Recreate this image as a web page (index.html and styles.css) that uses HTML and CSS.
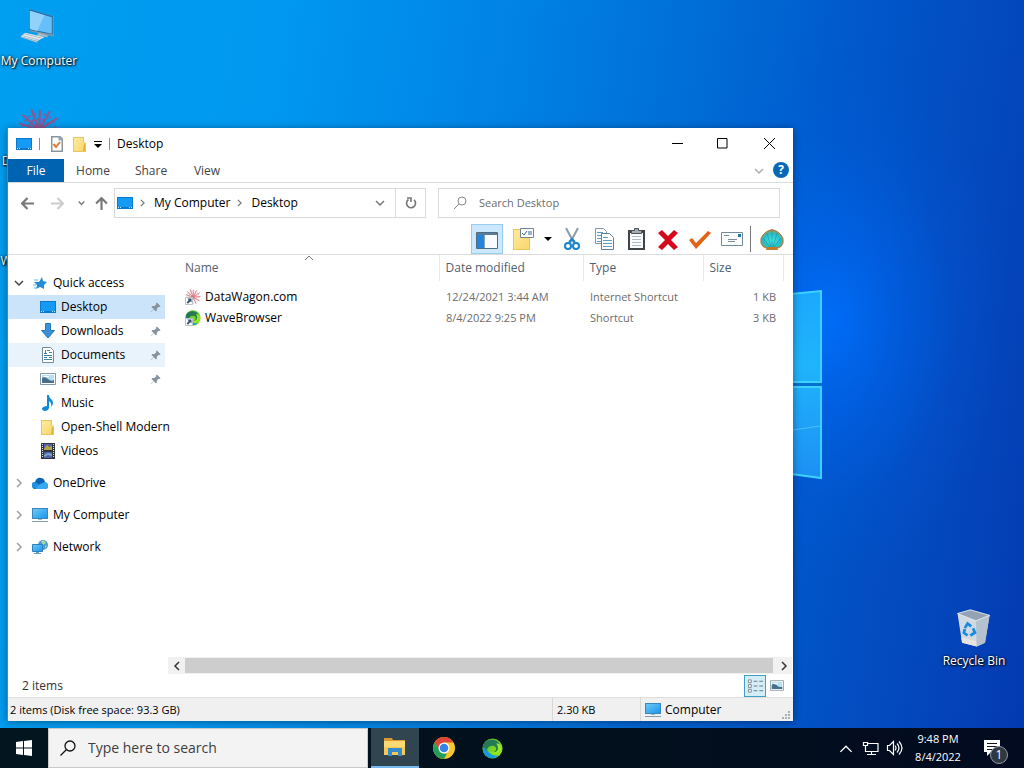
FILE: index.html
```html
<!DOCTYPE html>
<html lang="en">
<head>
<meta charset="utf-8">
<title>Desktop</title>
<link rel="stylesheet" href="styles.css">
</head>
<body>
<svg class="defs" aria-hidden="true">
  <defs>
    <linearGradient id="gBlue" x1="0" y1="0" x2="1" y2="1"><stop offset="0" stop-color="#6cc8fa"/><stop offset="1" stop-color="#1c96ea"/></linearGradient>
    <linearGradient id="gFolder" x1="0" y1="0" x2="1" y2="1"><stop offset="0" stop-color="#ffeaa0"/><stop offset="1" stop-color="#f8d669"/></linearGradient>
    <linearGradient id="gWave" x1="0" y1="0" x2="1" y2="1"><stop offset="0" stop-color="#48b838"/><stop offset="1" stop-color="#a0ee10"/></linearGradient>
    <linearGradient id="gPane" x1="0" y1="0" x2="0" y2="1"><stop offset="0" stop-color="#1ca8fc"/><stop offset=".4" stop-color="#20b4fc"/><stop offset="1" stop-color="#1c90f4"/></linearGradient>
    <radialGradient id="gShell" cx=".5" cy=".6" r=".6"><stop offset="0" stop-color="#46e6ea"/><stop offset=".65" stop-color="#28bcc4"/><stop offset="1" stop-color="#c98c36"/></radialGradient>
    <symbol id="desk" viewBox="0 0 16 12"><path fill="#0b78cc" d="M0 0h16v12H0z"/><path fill="#159af5" d="M1 1h14v9H1z"/><path fill="#b9e4ff" d="M1 10h1v1H1zm2 0h1v1H3zm9 0h1v1h-1zm2 0h1v1h-1z"/></symbol>
    <symbol id="folder" viewBox="0 0 14 16"><path fill="#e9c65b" d="M0 1h11v5l2 1v9H0z"/><path fill="url(#gFolder)" d="M1 2h9v4.500l2 1V15H1z"/><path fill="#dfb33d" d="M11 8h1v7h-2z"/></symbol>
    <symbol id="monitor" viewBox="0 0 16 16"><path fill="#3b86ba" d="M0 1h16v11H0z"/><path fill="url(#gBlue)" d="M1 2h14v9H1z"/><path fill="#9fb8c8" d="M6 12h4v1H6z"/><path fill="#849dad" d="M0 14h16v1H0z"/></symbol>
    <symbol id="picture" viewBox="0 0 16 12"><path fill="#fff" stroke="#8798a4" d="M.5.5h15v11H.5z"/><path fill="#b8def2" d="M2 2h12v8H2z"/><path fill="#466f89" d="M2 5q3-2 6 1t6 1v3H2z"/><path fill="#fff" d="M4 3h5v1H4z"/></symbol>
    <symbol id="pin" viewBox="0 0 12 12"><path fill="#85919c" d="m7.500.5 4 4-1 .9-1-.3-2.200 2.200.2 2-1 1-2.300-2.400L.9 11.300l-.3-.3L4 7.700 1.600 5.400l1-1 2 .2L6.900 2.400 6.600 1.400z"/></symbol>
    <symbol id="right" viewBox="0 0 8 10"><path fill="none" stroke="currentColor" stroke-width="1.500" d="m2 1 4 4-4 4"/></symbol>
    <symbol id="down" viewBox="0 0 10 8"><path fill="none" stroke="currentColor" stroke-width="1.500" d="m1 2 4 4 4-4"/></symbol>
    <symbol id="burst" viewBox="0 0 40 40"><g fill="none" stroke="currentColor" stroke-width="2"><path d="M20 20 2 14m18 6L5 6m15 14L13 1m7 19 1-18m-1 18L30 3M20 20 37 9M20 20l19-1M20 20l17 10M20 20l8 17M20 20l-4 18M20 20 6 33m14-13L1 24"/><circle cx="20" cy="20" r="5"/><circle cx="20" cy="20" r="10" stroke-dasharray="3 2"/><circle cx="20" cy="20" r="15" stroke-dasharray="2 3"/></g></symbol>
    <symbol id="wave" viewBox="0 0 22 22"><circle cx="11" cy="11" r="10.500" fill="url(#gWave)"/><path fill="#1599df" d="M1 10C5 8 5 16 12 18q3 1 6 0C12 24 0 21 1 10z"/><path fill="#257a55" d="M1 10C1 0 17-1 19 8q-1-2-4-2c5 3 2 10-3 8 4 0 4-6-1-6-5 0-6 4-6 6Q3 9 1 10z"/><path fill="#9be725" d="M15 6c5-1 6 5 4 8s-8 4-11 1c8 2 11-4 7-9z"/></symbol>
    <symbol id="shortcut" viewBox="0 0 8 8"><path fill="#fff" stroke="#b8c4cc" d="M.5.500h7v7h-7z"/><path fill="#31506d" d="M2.500 1.500h4v4L5.200 4.300 3 6.800 1.700 5.600l2-2.700z"/></symbol>
  </defs>
</svg>

<main class="desktop">
  <svg class="logo" viewBox="0 0 32 192" aria-hidden="true">
    <path fill="url(#gPane)" stroke="#3cd2ff" stroke-width="2" d="M-2 5 28 2v91H-2zM-2 98h30v91L-2 185z"/>
    <path fill="none" stroke="#50bcff" d="m0 141 27-4"/><path fill="#0870d2" d="M0 94h29v3H0z"/>
  </svg>
  <div class="shortcuts">
    <a class="desk-icon" href="#"><svg viewBox="0 0 48 48"><path fill="#8797a2" d="m13 1 27 8v22l-27-6z"/><path fill="#1c6fac" d="m13 1 26 8v20L13 24z"/><path fill="#66bff6" d="m14 3 24 7v18L14 23z"/><path fill="#91d2fa" d="m14 3 16 5-8 17-8-2z"/><path fill="#a9b8c0" d="m24 27 10 3-1 2-12-2z"/><path fill="#e3e9ec" d="M9 27l21 5-8 4-18-5z"/><path fill="#aebdc5" d="m4 31 18 5v2L4 32z"/><path stroke="#adbac2" d="m8 28 19 5M6 30l18 5"/></svg><span>My Computer</span></a>
    <a class="desk-icon" href="#"><svg class="red"><use href="#burst"/></svg><span>DataWagon…</span></a>
    <a class="desk-icon" href="#"><svg><use href="#wave"/></svg><span>WaveBrowser</span></a>
  </div>
  <a class="desk-icon recycle" href="#"><svg viewBox="0 0 48 48"><path fill="#d2d9e0" d="m6 6 35 2-5 30-9 4-16-4z"/><path fill="#b5c1ce" d="m26 14 15-6-5 30-9 4z"/><path fill="#93a2b5" stroke="#e3eaf0" d="m6 6 14-4 21 6-15 6z"/><path fill="#e9e4df" d="m10 32 16 4 1 6-16-4z"/><g fill="none" stroke="#168bdf" stroke-width="3"><path d="m14 22 3-5 4 3M23 22l2 5-5 3M17 30l-4-3 1-4"/></g></svg><span>Recycle Bin</span></a>

  <section class="window">
    <header class="titlebar">
      <svg class="i-desk"><use href="#desk"/></svg><i class="bar"></i>
      <button class="plain" aria-label="Properties"><svg class="i-page" viewBox="0 0 12 16"><path fill="#fff" stroke="#8a969e" d="M.5.500h8l3 3v12H.500z"/><path fill="none" stroke="#9aa5ad" d="M8.500.500v3h3"/><path fill="none" stroke="#e07830" stroke-width="2" d="m2.500 8 2.500 3 4-5"/></svg></button>
      <button class="plain" aria-label="New folder"><svg class="i-folder"><use href="#folder"/></svg></button>
      <button class="plain" aria-label="Customize toolbar"><svg class="i-custom" viewBox="0 0 8 8"><path d="M0 1h8v1H0zM0 4h8L4 8z"/></svg></button>
      <i class="bar"></i><h1>Desktop</h1>
      <div class="controls">
        <button aria-label="Minimize"><svg viewBox="0 0 11 11"><path d="M0 5.500h11"/></svg></button>
        <button aria-label="Maximize"><svg viewBox="0 0 11 11"><path d="M.5.500h9.500v9.500H.500z"/></svg></button>
        <button aria-label="Close"><svg viewBox="0 0 11 11"><path d="m0 0 11 11M11 0 0 11"/></svg></button>
      </div>
    </header>
    <nav class="ribbon">
      <button class="file">File</button><button>Home</button><button>Share</button><button>View</button>
      <button class="expand" aria-label="Expand ribbon"><svg class="i-down"><use href="#down"/></svg></button>
      <button class="help" aria-label="Help">?</button>
    </nav>
    <div class="address-row">
      <button class="plain back" aria-label="Back"><svg viewBox="0 0 12 12"><path d="M12 6H1m5-5L1 6l5 5"/></svg></button>
      <button class="plain forward" aria-label="Forward"><svg viewBox="0 0 12 12"><path d="M0 6h11M6 1l5 5-5 5"/></svg></button>
      <button class="plain recent" aria-label="Recent locations"><svg viewBox="0 0 10 8"><path d="m1 2 4 4 4-4"/></svg></button>
      <button class="plain up" aria-label="Up"><svg viewBox="0 0 12 12"><path d="M6 12V1M1 6l5-5 5 5"/></svg></button>
      <div class="address">
        <svg class="i-desk"><use href="#desk"/></svg><svg class="i-right"><use href="#right"/></svg>
        <a href="#">My Computer</a><svg class="i-right"><use href="#right"/></svg><a href="#">Desktop</a>
        <button class="drop" aria-label="Previous locations"><svg class="i-down"><use href="#down"/></svg></button>
        <button class="refresh" aria-label="Refresh"><svg viewBox="0 0 12 12"><path fill="none" stroke="#777" stroke-width="1.600" d="M3.500 2.500A4.500 4.500 0 1 0 9 2.800M2 1h4v4"/></svg></button>
      </div>
      <label class="search"><svg viewBox="0 0 14 14"><circle cx="9" cy="5" r="4"/><path d="m6 8-5 5"/></svg><input type="text" placeholder="Search Desktop" aria-label="Search Desktop"></label>
    </div>
    <div class="toolbar">
      <button class="tool on" aria-label="Navigation pane"><svg viewBox="0 0 24 24"><path fill="#f8fcff" stroke="#506c82" d="M1.500 5.500h21v16h-21z"/><path fill="#5c7d95" d="M2 6h20v2H2z"/><path fill="#2385dc" d="M2 8h7v13H2z"/><path fill="#88a5ba" d="M9 8h1v13H9z"/></svg></button>
      <button class="tool" aria-label="Folder options"><svg viewBox="0 0 24 24"><path fill="#e8c45a" d="M1 2h14v7h3v14H1z"/><path fill="url(#gFolder)" d="M2 3h12v7h3v12H2z"/><path fill="#fff" stroke="#718594" d="M8.500 1.500h13v9h-13z"/><path fill="none" stroke="#326a9a" d="m10 6 2 2 3-4m1 1h4m-4 2h4"/></svg></button>
      <button class="arrow" aria-label="More options"><svg viewBox="0 0 8 4"><path d="M0 0h8L4 4z"/></svg></button>
      <button class="tool" aria-label="Cut"><svg viewBox="0 0 24 24"><path fill="none" stroke="#8c9ba7" stroke-width="2" d="m6 1 8 15M18 1l-8 15"/><path fill="none" stroke="#1685cb" stroke-width="2" d="m9 15 3-3 3 3"/><circle cx="8" cy="19" r="3" fill="none" stroke="#1685cb" stroke-width="2"/><circle cx="16" cy="19" r="3" fill="none" stroke="#1685cb" stroke-width="2"/></svg></button>
      <button class="tool" aria-label="Copy"><svg viewBox="0 0 24 24"><path fill="#fff" stroke="#8799a6" d="M3.500 1.500h8l3 3v12h-11z"/><path fill="#fff" stroke="#5c8099" d="M9.500 6.500h8l4 4v12h-12z"/><path stroke="#609dc5" d="M5 5.500h6m-6 3h4m-4 3h4m-4 3h4m2-4h5m-5 3h9m-9 3h9m-9 3h9"/></svg></button>
      <button class="tool" aria-label="Paste"><svg viewBox="0 0 24 24"><path fill="#3e4448" d="M4 3h17v20H4z"/><path fill="#f9fbfc" d="M6 6h13v15H6z"/><path fill="#a4adb3" stroke="#4d555a" d="M7.500 3.500h3v-2h4v2h3v3h-10z"/><path stroke="#b2bbc1" d="M8 9.500h9m-9 3h9m-9 3h9m-9 3h9"/></svg></button>
      <button class="tool" aria-label="Delete"><svg viewBox="0 0 24 24"><path fill="#d4091c" d="m2 6 4-3 6 6 6-6 4 3-7 7 7 7-4 3-6-6-6 6-4-3 7-7z"/></svg></button>
      <button class="tool" aria-label="Apply"><svg viewBox="0 0 24 24"><path fill="#e46216" d="m1 13 3-2 4 5L20 4l3 2L8 22z"/></svg></button>
      <button class="tool" aria-label="Mail"><svg viewBox="0 0 24 24"><path fill="#fafcfd" stroke="#718997" d="M1.500 5.500h21v13h-21z"/><path fill="#2475aa" d="M18 7h3v3h-3z"/><path stroke="#7e8b93" d="M4 8.500h5m-1 4h9m-9 2h7"/></svg></button>
      <i class="divider"></i>
      <button class="tool" aria-label="Open-Shell settings"><svg viewBox="0 0 24 24"><path fill="url(#gShell)" stroke="#b0783c" d="M6 21q-4-1-5-5-1-5 2-8 2-3 5-4 4-3 8 0 3 1 5 4 3 3 2 8-1 4-5 5z"/><path fill="none" stroke="#178e9d" stroke-width=".6" d="M10 20 3 11m8 9L7 6m5 14V4m1 16 4-14m-3 14 7-9"/><path fill="#c57b28" d="M7 20h10l1 3H6z"/></svg></button>
    </div>
    <div class="body">
      <aside class="tree">
        <ul>
          <li><a class="root" href="#"><svg class="chev i-down"><use href="#down"/></svg><svg class="ico" viewBox="0 0 16 16"><path fill="#238ddb" d="m10 2 1 4 4 1-3 3v4l-4-2-4 2 1-4-3-3h5z"/><path stroke="#65b9ef" d="M2 5h4M1 10h3M2 13h2"/></svg>Quick access</a></li>
          <li><a class="item selected" href="#"><svg class="ico"><use href="#desk"/></svg><span>Desktop</span><svg class="pin"><use href="#pin"/></svg></a></li>
          <li><a class="item" href="#"><svg class="ico" viewBox="0 0 16 16"><path fill="#3b91da" stroke="#2878b9" d="M5.500.500h5v7h4L8 15 1.500 7.500h4z"/></svg><span>Downloads</span><svg class="pin"><use href="#pin"/></svg></a></li>
          <li><a class="item hover" href="#"><svg class="ico" viewBox="0 0 16 16"><path fill="#fff" stroke="#748a96" d="M2.500.500h8l3 3v12h-11z"/><path fill="none" stroke="#3f83a2" d="M7 3.500h3M4 6.500h3m2-1h3m-8 3h8m-8 2h3m2 0h3m-8 2h8M5.500 3v4"/></svg><span>Documents</span><svg class="pin"><use href="#pin"/></svg></a></li>
          <li><a class="item" href="#"><svg class="ico"><use href="#picture"/></svg><span>Pictures</span><svg class="pin"><use href="#pin"/></svg></a></li>
          <li><a class="item" href="#"><svg class="ico" viewBox="0 0 16 16"><path fill="#118bd7" d="M7 0h2c0 4 4 4 4 8q0 2-2 4c1-4-1-5-2-6v7q-1 3-4 3-3-.500-3-2.500Q3 11 7 11z"/></svg><span>Music</span></a></li>
          <li><a class="item" href="#"><svg class="ico"><use href="#folder"/></svg><span>Open-Shell Modern</span></a></li>
          <li><a class="item" href="#"><svg class="ico" viewBox="0 0 16 16"><path fill="#30353a" d="M1 0h14v16H1z"/><path fill="#5263a8" d="M4 1h8v6H4zm0 8h8v6H4z"/><path fill="#b2a548" d="m4 6 3-4 2 2 3-1v4H4z"/><path fill="#84a5c7" d="m4 12 4-2 4 1v2l-4-1-4 2z"/><path stroke="#e5e8ea" stroke-dasharray="1 1" d="M2.500 1v14m11-14v14"/></svg><span>Videos</span></a></li>
          <li class="group"><a class="root" href="#"><svg class="chev i-right"><use href="#right"/></svg><svg class="ico" viewBox="0 0 16 16"><path fill="#0964b5" d="M0 10q0-3 3-3 2-5 6-4 3 0 4 4 3 1 3 4 0 3-3 3H3q-3 0-3-4z"/><path fill="#1d91e2" d="m3 7 10 6H3q-3 0-3-3 0-3 3-3z"/><path fill="#38a9ed" d="m8 9 5-2q3 1 3 4 0 3-3 3H3z"/></svg>OneDrive</a></li>
          <li class="group"><a class="root" href="#"><svg class="chev i-right"><use href="#right"/></svg><svg class="ico"><use href="#monitor"/></svg>My Computer</a></li>
          <li class="group"><a class="root" href="#"><svg class="chev i-right"><use href="#right"/></svg><svg class="ico" viewBox="0 0 16 16"><circle cx="11" cy="6" r="5" fill="#4a9dce"/><path fill="#a4d7ae" d="m9 2 3-1 2 3-3 2zm4 5 2-1-2 4z"/><path fill="url(#gBlue)" stroke="#2b7fbc" d="M.5 5.500h10v7H.500z"/><path fill="#6d9bb9" d="M4 13h3v1h2v1H2v-1h2z"/></svg>Network</a></li>
        </ul>
      </aside>
      <div class="content">
        <svg class="sort" viewBox="0 0 10 6" aria-hidden="true"><path fill="none" stroke="#777" d="m1 5 4-4 4 4"/></svg>
        <table>
          <colgroup><col><col class="c-date"><col class="c-type"><col class="c-size"><col class="c-end"></colgroup>
          <thead><tr><th>Name</th><th>Date modified</th><th>Type</th><th>Size</th><th></th></tr></thead>
          <tbody>
            <tr><td><span class="name"><svg viewBox="0 0 16 16"><use class="pink" href="#burst"/><use href="#shortcut" y="8" width="8" height="8"/></svg>DataWagon.com</span></td><td>12/24/2021 3:44 AM</td><td>Internet Shortcut</td><td class="size">1 KB</td><td></td></tr>
            <tr><td><span class="name"><svg viewBox="0 0 16 16"><use href="#wave"/><use href="#shortcut" y="8" width="8" height="8"/></svg>WaveBrowser</span></td><td>8/4/2022 9:25 PM</td><td>Shortcut</td><td class="size">3 KB</td><td></td></tr>
          </tbody>
        </table>
        <div class="scrollbar"><button aria-label="Scroll left"><svg class="i-right flip"><use href="#right"/></svg></button><i></i><button aria-label="Scroll right"><svg class="i-right"><use href="#right"/></svg></button></div>
      </div>
    </div>
    <div class="counts"><span>2 items</span>
      <button class="view active" aria-label="Details view"><svg viewBox="0 0 18 14"><path fill="#fff" stroke="#7a8790" d="M1.500.500h3v3h-3zm0 5h3v3h-3zm0 5h3v3h-3z"/><path stroke="#647580" d="M7 2h4m2 0h4M7 7h4m2 0h4M7 12h4m2 0h4"/></svg></button>
      <button class="view" aria-label="Large icons view"><svg class="i-picture"><use href="#picture"/></svg></button>
    </div>
    <footer class="status"><span class="space">2 items (Disk free space: 93.3 GB)</span><span class="kb">2.30 KB</span><span class="zone"><svg class="ico"><use href="#monitor"/></svg>Computer</span>
      <svg class="grip" viewBox="0 0 9 9"><path fill="#a8b0b6" d="M7 1h2v2H7zM4 4h2v2H4zm3 0h2v2H7zM1 7h2v2H1zm3 0h2v2H4zm3 0h2v2H7z"/></svg></footer>
  </section>
</main>

<footer class="taskbar">
  <button class="start" aria-label="Start"><svg viewBox="0 0 16 16"><path fill="#fff" d="m0 2 7-1v6.500H0zM8 1l8-1v7.500H8zM0 8.500h7V15l-7-1zm8 0h8V16l-8-1z"/></svg></button>
  <label class="task-search"><svg viewBox="0 0 16 16"><circle cx="10" cy="6" r="5"/><path d="m6.500 9.500-6 6"/></svg><input type="text" placeholder="Type here to search" aria-label="Type here to search"></label>
  <button class="app current" aria-label="File Explorer"><svg viewBox="0 0 24 24"><path fill="#dc9b2e" d="M1 3h8l1 2h12v5H1z"/><path fill="#ffda74" d="M1 6h21v14H1z"/><path fill="#f8c856" d="M1 12h21v8H1z"/><path fill="#348ccc" d="M5 13h14v8h-4v-4H9v4H5z"/></svg></button>
  <button class="app" aria-label="Chrome"><svg viewBox="0 0 24 24"><circle cx="12" cy="12" r="11" fill="#fbc62d"/><path fill="#df4437" d="M2.500 6.500a11 11 0 0 1 19 0H12L8 14z"/><path fill="#249d58" d="M2.500 6.500 8 14l4 3.500h3L12 23A11 11 0 0 1 2.500 6.500z"/><circle cx="12" cy="12" r="5.500" fill="#fff"/><circle cx="12" cy="12" r="4.300" fill="#3982ee"/></svg></button>
  <button class="app" aria-label="WaveBrowser"><svg class="i-wave"><use href="#wave"/></svg></button>
  <div class="tray">
    <button class="show" aria-label="Show hidden icons"><svg viewBox="0 0 12 8"><path d="m1 7 5-5 5 5"/></svg></button>
    <button aria-label="Network"><svg viewBox="0 0 17 16"><path d="M5 3.500h11v8H3.500V7M9.500 12v2M5 14.500h9M1.500 2.500h4v3h-4zm2 3V7"/></svg></button>
    <button aria-label="Volume"><svg viewBox="0 0 17 16"><path d="M1.500 5.500h2l4-4v13l-4-4h-2zM9 5.500q2 2.500 0 5M11 3.500q4 4.500 0 9M13 1.500q6 6.500 0 13"/></svg></button>
  </div>
  <time class="clock">9:48 PM<br>8/4/2022</time>
  <button class="notice" aria-label="1 notification"><svg viewBox="0 0 16 16"><path fill="#fff" d="M0 0h16v12H7l-4 4v-4H0z"/><path stroke="#0a1722" d="M3 3.500h10m-10 3h10m-10 3h7"/></svg><span class="badge">1</span></button>
</footer>
</body>
</html>
```
FILE: styles.css
```css
* { box-sizing: border-box; }
html, body { height: 100%; }
body { margin: 0; display: flex; flex-direction: column; overflow: hidden; font: 12px/16px "Open Sans", "Noto Sans", sans-serif; color: #000; }
button { padding: 0; border: 0; background: none; font: inherit; color: inherit; display: flex; align-items: center; justify-content: center; flex: none; }
input { font: inherit; border: 0; outline: 0; background: none; padding: 0; min-width: 0; flex: 1; }
a { color: inherit; text-decoration: none; }
svg { display: block; flex: none; }
.defs { position: absolute; width: 0; height: 0; }

.desktop { flex: 1; min-height: 0; position: relative; overflow: hidden;
  background:
    radial-gradient(ellipse 180px 260px at 81% 44%, rgba(0, 112, 255, .85), rgba(0, 104, 245, .5) 35%, rgba(0, 96, 235, .15) 70%, rgba(0, 90, 230, 0)),
    linear-gradient(99deg, #009ff0 0%, #0098f0 25%, #0084e6 44%, #0070d8 60%, #0058ca 76%, #0447bc 90%, #033ab2 100%); }
.logo { position: absolute; left: 793px; top: 289px; width: 32px; height: 192px; }
.shortcuts { display: flex; flex-direction: column; width: 78px; padding-top: 8px; }
.desk-icon { display: flex; flex-direction: column; align-items: center; height: 100px; gap: 1px; color: #fff; text-shadow: 1px 1px 2px #000, 0 0 3px #000; white-space: nowrap; }
.desk-icon svg { width: 44px; height: 44px; }
.desk-icon .red { color: #8b5896; }
.recycle { position: absolute; right: 10px; bottom: 20px; width: 80px; }

.window { position: absolute; left: 7px; top: 128px; right: 231px; bottom: 7px; background: #fff; border-left: 1px solid #2695cf; display: flex; flex-direction: column; box-shadow: 0 1px 8px rgba(0, 0, 0, .4); }
.titlebar { display: flex; align-items: center; height: 31px; padding-left: 8px; gap: 7px; }
.i-desk { width: 16px; height: 12px; }
.bar { width: 1px; height: 12px; background: #8c8c8c; }
.i-page { width: 12px; height: 16px; margin-left: 4px; }
.i-folder { width: 14px; height: 16px; margin-left: 3px; }
.i-custom { width: 8px; height: 8px; }
h1 { margin: 0; font: inherit; }
.controls { display: flex; margin-left: auto; }
.controls button { width: 45px; height: 30px; }
.controls button:last-child { width: 48px; }
.controls svg { width: 11px; height: 11px; fill: none; stroke: #000; }
.ribbon { display: flex; align-items: stretch; height: 24px; border-bottom: 1px solid #dadbdc; color: #444; }
.ribbon button { width: 58px; }
.ribbon .file { width: 56px; background: #0063b1; color: #fff; }
.ribbon button:nth-child(4) { width: 54px; }
.i-down { width: 10px; height: 8px; color: #777; }
.ribbon .expand { width: 20px; margin-left: auto; }
.expand .i-down { color: #aaa; }
.ribbon .help { width: 16px; height: 16px; margin: 3px 4px; border-radius: 50%; background: #0868b8; color: #fff; font-weight: 700; }
.address-row { display: flex; align-items: center; height: 40px; padding: 0 13px 0 4px; }
.plain svg { fill: none; stroke: #777; stroke-width: 2; }
.titlebar .plain svg { fill: #000; stroke: none; }
.address-row .plain { height: 29px; justify-content: flex-end; }
.back svg, .forward svg, .up svg { width: 13px; height: 13px; }
.back { width: 22px; }
.forward { width: 30px; }
.plain.forward svg { stroke: #ccc; }
.recent { width: 21px; }
.recent svg { width: 7px; height: 6px; }
.up { width: 23px; }
.address { display: flex; align-items: center; height: 30px; border: 1px solid #d9d9d9; flex: 1 1 312px; min-width: 0; padding-left: 2px; margin-left: 6px; }
.i-right { width: 8px; height: 10px; color: #777; }
.address .i-right { width: 7px; height: 8px; margin: 0 8px 0 6px; }
.drop { margin-left: auto; width: 30px; }
.refresh { align-self: stretch; width: 30px; border-left: 1px solid #d9d9d9; }
.refresh svg { width: 12px; height: 12px; }
.search { display: flex; align-items: center; height: 30px; border: 1px solid #d9d9d9; margin-left: 12px; flex: 1 1 342px; min-width: 0; padding-left: 14px; gap: 12px; font-size: 11px; }
.search svg { width: 14px; height: 14px; fill: none; stroke: #888; }
.search input::placeholder { color: #6d6d6d; opacity: 1; }
.toolbar { display: flex; align-items: center; justify-content: flex-end; height: 32px; border-bottom: 1px solid #dcdcdc; padding-right: 5px; }
.tool { width: 32px; height: 30px; }
.tool svg { width: 24px; height: 24px; }
.on { background: #cce8ff; border: 1px solid #98cdee; margin-right: 5px; }
.arrow { width: 16px; height: 30px; }
.arrow svg { width: 8px; height: 4px; }
.divider { width: 1px; height: 26px; background: #777; margin: 0 5px 0 2px; }
.body { display: flex; flex: 1; min-height: 0; }
.tree { width: 157px; padding-top: 16px; flex: none; }
.tree ul { list-style: none; margin: 0; padding: 0; }
.tree a { display: flex; align-items: center; height: 24px; white-space: nowrap; }
.root { gap: 5px; padding-left: 6px; }
.chev { width: 10px; }
.root .chev { margin-right: 3px; color: #a0a0a0; }
.root .chev.i-down { color: #444; }
.ico { width: 16px; height: 16px; }
.item { padding-left: 32px; gap: 5px; }
.item span { flex: 1; min-width: 0; }
.item .pin { width: 11px; height: 11px; margin-right: 4px; }
.selected { background: #cce4f9; }
.hover { background: #e8f3fc; }
.group { margin-top: 8px; }
.content { flex: 1; min-width: 0; display: flex; flex-direction: column; position: relative; padding-left: 3px; }
.sort { position: absolute; left: 139px; top: 0; width: 10px; height: 6px; }
table { width: 100%; table-layout: fixed; border-collapse: collapse; color: #6d6d6d; }
.c-date { width: 144px; }
.c-type { width: 120px; }
.c-size { width: 80px; }
.c-end { width: 10px; }
th { height: 26px; padding: 0 6px; font-weight: 400; text-align: left; color: #53616f; border-right: 1px solid #e8e8e8; }
th:last-child { border: 0; padding: 0; }
th:first-child, td:first-child { padding-left: 17px; }
td { height: 21px; padding: 0 7px; white-space: nowrap; font-size: 11px; }
td:last-child { padding: 0; }
tbody::before { content: ""; display: table-row; height: 5px; }
.name { display: flex; align-items: center; gap: 4px; color: #000; font-size: 12px; }
.name svg { width: 16px; height: 16px; }
.pink { color: #d57380; }
.size { text-align: right; }
.scrollbar { display: flex; height: 17px; margin: auto 1px 0 0; background: #f1f1f1; }
.scrollbar button { width: 17px; }
.scrollbar button svg { color: #333; width: 8px; height: 10px; }
.scrollbar i { flex: 1; height: 15px; margin: 1px 2px 0 0; background: #cdcdcd; }
.flip { transform: scaleX(-1); }
.counts { display: flex; align-items: center; height: 23px; padding: 0 5px 0 14px; color: #333; }
.counts span { flex: 1; }
.view { width: 22px; height: 22px; }
.view svg { width: 17px; height: 14px; }
.view .i-picture { width: 14px; height: 11px; }
.active { background: #d4eef8; border: 1px solid #3fa0c3; }
.status { display: flex; align-items: center; height: 24px; background: #f0f0f0; border-top: 1px solid #dedede; }
.status > span { height: 23px; padding: 4px 2px 0; }
.space { flex: 1; }
.space, .kb { font-size: 11px; }
.kb { width: 88px; border-left: 1px solid #d8d8d8; }
.status .kb { padding-left: 4px; }
.zone { width: 141px; border-left: 1px solid #d8d8d8; display: flex; gap: 4px; }
.status .zone { padding-left: 4px; }
.grip { width: 9px; height: 9px; align-self: flex-end; margin: 0 3px 2px 0; }

.taskbar { display: flex; align-items: stretch; height: 40px; background: linear-gradient(90deg, #02161f, #020f1c 60%, #020b20); color: #fff; flex: none; }
.start { width: 48px; }
.start svg { width: 16px; height: 16px; }
.task-search { display: flex; align-items: center; width: 320px; margin-right: 3px; padding-left: 11px; gap: 12px; background: #f3f3f3; border: 1px solid #c8c8c8; font-size: 14px; line-height: 20px; }
.task-search svg { width: 16px; height: 16px; fill: none; stroke: #111; stroke-width: 1.3; }
.task-search input::placeholder { color: #3e3e3e; opacity: 1; }
.app { width: 49px; }
.app svg { width: 24px; height: 24px; }
.app .i-wave { width: 21px; height: 21px; }
.current { width: 48px; background: #314550; border-bottom: 2px solid #76b9ed; }
.tray { display: flex; margin-left: auto; }
.tray button { width: 24px; }
.tray svg { width: 17px; height: 16px; fill: none; stroke: #fff; stroke-width: 1.2; }
.tray .show svg { width: 14px; height: 9px; }
.clock { width: 64px; padding-top: 2px; font-size: 11px; line-height: 18px; text-align: center; }
.notice { position: relative; width: 51px; margin-right: 3px; padding-right: 8px; }
.notice svg { width: 16px; height: 16px; }
.badge { position: absolute; left: 20px; top: 18px; width: 18px; height: 18px; border: 1px solid #9399a0; border-radius: 50%; background: #2e3841; line-height: 16px; }
```
